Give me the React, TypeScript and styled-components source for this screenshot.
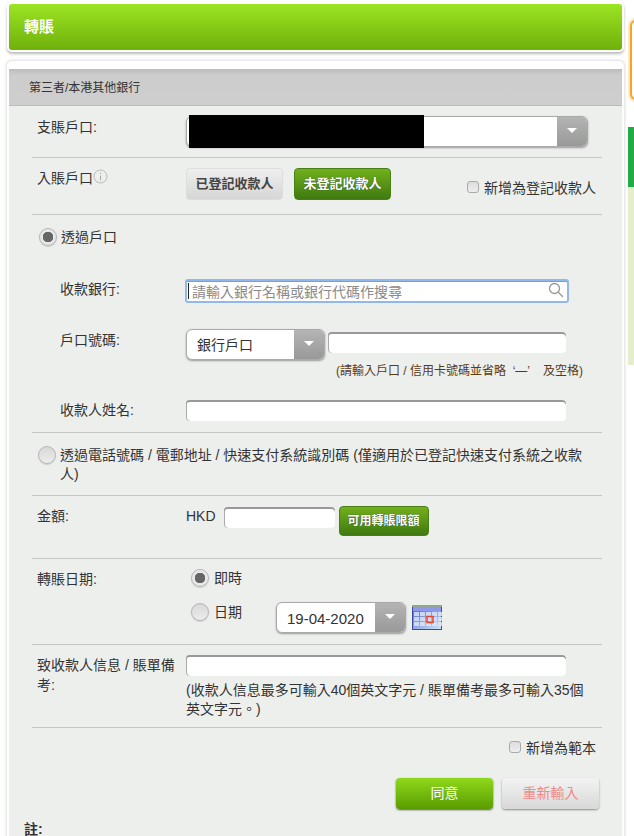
import React from "react";
import styled, { createGlobalStyle } from "styled-components";

const Global = createGlobalStyle`
  html, body { margin: 0; padding: 0; background: #fff; overflow: hidden; }
  body { font-family: "Liberation Sans", "Noto Sans CJK TC", sans-serif; font-size: 14px; color: #333; }
  * { box-sizing: border-box; }
`;

const Page = styled.div`
  width: 634px;
  height: 836px;
  overflow: hidden;
  display: grid;
  grid-template-columns: 628px 6px;
`;
const Main = styled.div`
  padding: 4px 0 0 9px;
  width: 628px;
`;
const Header = styled.div`
  width: 613px;
  height: 46px;
  border-radius: 3px;
  background: linear-gradient(#9be522, #70b00c);
  box-shadow: 0 0 0 2px #fff, 0 2px 3px 2px #bbb;
  color: #fff;
  font-size: 15px;
  font-weight: 700;
  line-height: 46px;
  padding-left: 15px;
`;
const Panel = styled.div`
  margin-top: 13px;
  width: 613px;
  height: 780px;
  background: #edefed;
  padding-top: 6px;
  border-radius: 3px 3px 0 0;
  box-shadow: 0 0 0 2px #fff, 0 0 3px 3px #ddd;
  background-image: linear-gradient(#fff, #fff);
  background-size: 100% 8px;
  background-repeat: no-repeat;
`;
const SectionBar = styled.div`
  height: 37px;
  background: linear-gradient(#bdbdbd, #cdcdcd 18%, #cecece);
  border-bottom: 1px solid #bbb;
  font-size: 12px;
  line-height: 38px;
  padding-left: 20px;
  color: #333;
`;
const Row = styled.div<{ $h: number; $pt?: number }>`
  margin-left: 23px;
  width: 570px;
  height: ${(p) => p.$h}px;
  padding-top: ${(p) => p.$pt ?? 10}px;
  border-bottom: 1px solid #c4c6c4;
  display: grid;
  grid-template-columns: 154px 1fr;
  position: relative;
`;
const SubRow = styled.div<{ $mt: number }>`
  display: grid;
  grid-template-columns: 154px 1fr;
  margin-top: ${(p) => p.$mt}px;
`;
const Label = styled.div<{ $in?: boolean; $pt?: number }>`
  padding-left: ${(p) => (p.$in ? 28 : 5)}px;
  padding-top: ${(p) => p.$pt ?? 0}px;
  line-height: 20px;
  display: flex;
  align-items: flex-start;
`;
const FieldRow = styled.div<{ $gap?: number }>`
  display: flex;
  align-items: flex-start;
  gap: ${(p) => p.$gap ?? 3}px;
`;
const DateField = styled(FieldRow)`
  margin: -1px 0 0 29px;
`;
const SelectBox = styled.div<{ $w: number }>`
  width: ${(p) => p.$w}px;
  height: 31px;
  border-radius: 6px;
  display: flex;
  background: #fff;
  border: 1px solid #aaa;
  box-shadow: 0 1px 2px #999;
  overflow: hidden;
  flex: none;
`;
const SelectText = styled.div<{ $size?: number }>`
  flex: 1;
  padding-left: 10px;
  line-height: 31px;
  color: #333;
  font-size: ${(p) => p.$size ?? 14}px;
`;
const SelectArrow = styled.div`
  width: 30px;
  background: linear-gradient(#b4b4b4, #999);
  display: flex;
  align-items: center;
  justify-content: center;
  &::after {
    content: "";
    border-left: 5px solid transparent;
    border-right: 5px solid transparent;
    border-top: 5px solid #fff;
    margin-top: -3px;
  }
`;
const Redact = styled.div`
  position: absolute;
  left: 157px;
  top: 9px;
  width: 235px;
  height: 33px;
  background: #000;
`;
const TextBox = styled.input<{ $w: number; $mt?: number }>`
  width: ${(p) => p.$w}px;
  height: 21px;
  flex: none;
  display: block;
  margin-top: ${(p) => p.$mt ?? 0}px;
  border: none;
  outline: none;
  background: #fff;
  border-radius: 4px;
  box-shadow: inset 0 2px 0 #999, inset 1px 0 0 #aaa;
  padding: 0 6px;
`;
const SearchWrap = styled.div`
  position: relative;
  width: 382px;
  height: 22px;
  margin-top: 1px;
`;
const SearchInput = styled.input`
  width: 100%;
  height: 100%;
  border: none;
  outline: 2px solid #90b8ee;
  outline-offset: -1px;
  border-radius: 2px;
  background: #fff;
  box-shadow: inset 0 2px 0 #999;
  padding: 1px 26px 0 6px;
  font: 14px "Liberation Sans", "Noto Sans CJK TC", sans-serif;
  color: #333;
  &::placeholder { color: #8a8a8a; opacity: 1; }
`;
const Caret = styled.span`
  position: absolute;
  left: 2px;
  top: 3px;
  width: 1px;
  height: 16px;
  background: #222;
`;
const SearchIcon = styled.svg`
  position: absolute;
  right: 4px;
  top: 2px;
`;
const Btn = styled.div<{ $kind: "grey" | "dark" | "light" | "primary"; $w: number; $h?: number; $size?: number }>`
  width: ${(p) => p.$w}px;
  height: ${(p) => p.$h ?? 32}px;
  border-radius: 4px;
  flex: none;
  text-align: center;
  line-height: ${(p) => p.$h ?? 32}px;
  font-size: ${(p) => p.$size ?? 13}px;
  font-weight: 700;
  ${(p) =>
    p.$kind === "dark"
      ? `background: linear-gradient(#72b01c,#3f7a10); color:#fff; border:1px solid #4a7f18; line-height:${(p.$h ?? 32) - 2}px; text-shadow:0 0 1px #234;`
      : p.$kind === "primary"
      ? `background: linear-gradient(#8fd91c,#5a9c00); color:#fff; box-shadow:0 1px 2px #555; font-weight:400; font-size:14px;`
      : p.$kind === "light"
      ? `background: linear-gradient(#f3f3f3,#d8d8d8); color:#f08a8a; box-shadow:0 1px 2px #888; font-weight:400; font-size:14px;`
      : `background: linear-gradient(#efefef,#d6d6d6); color:#444; border:1px solid #ddd; line-height:${(p.$h ?? 32) - 2}px;`}
`;
const Check = styled.span`
  display: inline-block;
  width: 12px;
  height: 12px;
  margin-top: -2px;
  border: 1px solid #aaa;
  border-radius: 3px;
  background: linear-gradient(#ddd, #eee);
  flex: none;
`;
const CheckLabel = styled.div<{ $top: number }>`
  position: absolute;
  right: 6px;
  top: ${(p) => p.$top}px;
  display: flex;
  align-items: center;
  gap: 5px;
  line-height: 20px;
`;
const Radio = styled.span<{ $on?: boolean }>`
  display: inline-block;
  width: 18px;
  height: 18px;
  border-radius: 50%;
  border: 1px solid #b5b5b5;
  background: ${(p) =>
    p.$on
      ? "radial-gradient(circle, #666 0 5px, #e8e8e8 5.5px)"
      : "linear-gradient(#d8d8d8, #ececec)"};
  box-shadow: 0 1px 1px #ccc;
  flex: none;
`;
const RadioRow = styled.div<{ $ml?: number; $mt?: number; $gap?: number }>`
  display: flex;
  align-items: flex-start;
  gap: ${(p) => p.$gap ?? 4}px;
  margin-left: ${(p) => p.$ml ?? 7}px;
  margin-top: ${(p) => p.$mt ?? 0}px;
  line-height: 19px;
`;
const RadioText = styled.span`
  width: 530px;
`;
const Block = styled.div<{ $h: number; $pt: number }>`
  margin-left: 23px;
  width: 570px;
  height: ${(p) => p.$h}px;
  padding-top: ${(p) => p.$pt}px;
  border-bottom: 1px solid #c4c6c4;
`;
const Hint = styled.div`
  font-size: 12px;
  line-height: 16px;
  color: #5b3a16;
  margin: 3px 0 0 150px;
  white-space: pre;
`;
const Note = styled.div`
  font-size: 14px;
  line-height: 19px;
  margin-top: 5px;
  width: 405px;
  color: #333;
`;
const Footer = styled.div`
  margin-left: 23px;
  width: 570px;
  height: 81px;
  position: relative;
`;
const Actions = styled.div`
  display: flex;
  justify-content: flex-end;
  gap: 9px;
  padding: 50px 3px 0 0;
`;
const Remark = styled.div`
  margin: 10px 0 0 15px;
  font-weight: 700;
  font-size: 14px;
  line-height: 20px;
`;
const Side = styled.div`
  display: flex;
  flex-direction: column;
  overflow: hidden;
  padding-top: 20px;
`;
const Promo = styled.div`
  margin-left: 2px;
  width: 30px;
  height: 80px;
  flex: none;
  border: 2px solid #f6a32c;
  border-radius: 6px;
  box-shadow: 0 0 2px 2px #fbe2b4;
  background: #fff;
`;
const GreenTab = styled.div`
  margin-top: 27px;
  height: 60px;
  flex: none;
  background: #22ac45;
`;
const GreenBody = styled.div`
  height: 178px;
  flex: none;
  background: #e5eecb;
`;
const HKD = styled.span`
  line-height: 20px;
  margin-right: 4px;
`;
const InfoSvg = styled.svg`
  margin-top: 1px;
  flex: none;
`;
const CalendarSvg = styled.svg`
  margin-top: 3px;
  flex: none;
`;

const Info = () => (
  <InfoSvg width="15" height="15" viewBox="0 0 15 15" fill="none">
    <circle cx="7.5" cy="7.5" r="6.5" stroke="#bbb" />
    <path d="M7.5 6.5v5M7.5 3.5v1.5" stroke="#aaa" />
  </InfoSvg>
);

const Calendar = () => (
  <CalendarSvg width="30" height="25" viewBox="0 0 30 25">
    <defs>
      <linearGradient id="calBody" x1="0" x2="1" y1="0" y2="1">
        <stop offset="0" stopColor="#5a6fc8" />
        <stop offset="1" stopColor="#cfe6f8" />
      </linearGradient>
    </defs>
    <rect x="0" y="1" width="30" height="24" fill="#3b4aa5" />
    <rect x="0" y="0" width="30" height="2" fill="#8fa58c" />
    <rect x="1" y="2" width="28" height="4" fill="#8f98ea" />
    <rect x="1" y="6" width="28" height="18" fill="url(#calBody)" />
    {[7, 12, 17].map((y) =>
      [2, 8, 14, 20, 26].map((x) => (
        <rect key={`${x}-${y}`} x={x} y={y} width="5" height="4" fill="#dfeafa" opacity="0.8" />
      ))
    )}
    <rect x="15" y="11.5" width="6" height="6" fill="none" stroke="#e8442a" strokeWidth="1.5" />
  </CalendarSvg>
);

export default function App() {
  return (
    <Page>
      <Global />
      <Main>
        <Header>轉賬</Header>
        <Panel>
          <SectionBar>第三者/本港其他銀行</SectionBar>
          <Row $h={52}>
            <Label $pt={1}>支賬戶口:</Label>
            <SelectBox $w={402}>
              <SelectText />
              <SelectArrow />
            </SelectBox>
            <Redact />
          </Row>
          <Row $h={57}>
            <Label>
              入賬戶口
              <Info />
            </Label>
            <FieldRow $gap={11}>
              <Btn $kind="grey" $w={97}>已登記收款人</Btn>
              <Btn $kind="dark" $w={97}>未登記收款人</Btn>
            </FieldRow>
            <CheckLabel $top={20}>
              <Check />
              新增為登記收款人
            </CheckLabel>
          </Row>
          <Block $h={218} $pt={13}>
            <RadioRow>
              <Radio $on />
              透過戶口
            </RadioRow>
            <SubRow $mt={32}>
              <Label $in>收款銀行:</Label>
              <SearchWrap>
                <SearchInput placeholder="請輸入銀行名稱或銀行代碼作搜尋" />
                <Caret />
                <SearchIcon width="16" height="16" viewBox="0 0 16 16" fill="none" stroke="#999" strokeWidth="1.3">
                  <circle cx="6.5" cy="6.5" r="5" />
                  <path d="M10.3 10.3 15 15" />
                </SearchIcon>
              </SearchWrap>
            </SubRow>
            <SubRow $mt={27}>
              <Label $in $pt={1}>戶口號碼:</Label>
              <div>
                <FieldRow>
                  <SelectBox $w={139}>
                    <SelectText>銀行戶口</SelectText>
                    <SelectArrow />
                  </SelectBox>
                  <TextBox $w={238} $mt={3} />
                </FieldRow>
                <Hint>(請輸入戶口 / 信用卡號碼並省略  ‘—’    及空格)</Hint>
              </div>
            </SubRow>
            <SubRow $mt={21}>
              <Label $in>收款人姓名:</Label>
              <TextBox $w={380} />
            </SubRow>
          </Block>
          <Block $h={63} $pt={13}>
            <RadioRow $ml={6}>
              <Radio />
              <RadioText>透過電話號碼 / 電郵地址 / 快速支付系統識別碼 (僅適用於已登記快速支付系統之收款人)</RadioText>
            </RadioRow>
          </Block>
          <Row $h={63}>
            <Label>金額:</Label>
            <FieldRow $gap={4}>
              <HKD>HKD</HKD>
              <TextBox $w={111} $mt={1} />
              <Btn $kind="dark" $w={90} $h={30} $size={12}>可用轉賬限額</Btn>
            </FieldRow>
          </Row>
          <Row $h={86}>
            <Label>轉賬日期:</Label>
            <div>
              <RadioRow $ml={5} $gap={5}>
                <Radio $on />
                即時
              </RadioRow>
              <RadioRow $ml={5} $gap={5} $mt={15}>
                <Radio />
                <span>日期</span>
                <DateField $gap={6}>
                  <SelectBox $w={130}>
                    <SelectText $size={15}>19-04-2020</SelectText>
                    <SelectArrow />
                  </SelectBox>
                  <Calendar />
                </DateField>
              </RadioRow>
            </div>
          </Row>
          <Row $h={83}>
            <Label>致收款人信息 / 賬單備考:</Label>
            <div>
              <TextBox $w={380} />
              <Note>(收款人信息最多可輸入40個英文字元 / 賬單備考最多可輸入35個英文字元。)</Note>
            </div>
          </Row>
          <Footer>
            <CheckLabel $top={10}>
              <Check />
              新增為範本
            </CheckLabel>
            <Actions>
              <Btn $kind="primary" $w={97} $h={31}>同意</Btn>
              <Btn $kind="light" $w={97} $h={31}>重新輸入</Btn>
            </Actions>
          </Footer>
          <Remark>註:</Remark>
        </Panel>
      </Main>
      <Side>
        <Promo />
        <GreenTab />
        <GreenBody />
      </Side>
    </Page>
  );
}
